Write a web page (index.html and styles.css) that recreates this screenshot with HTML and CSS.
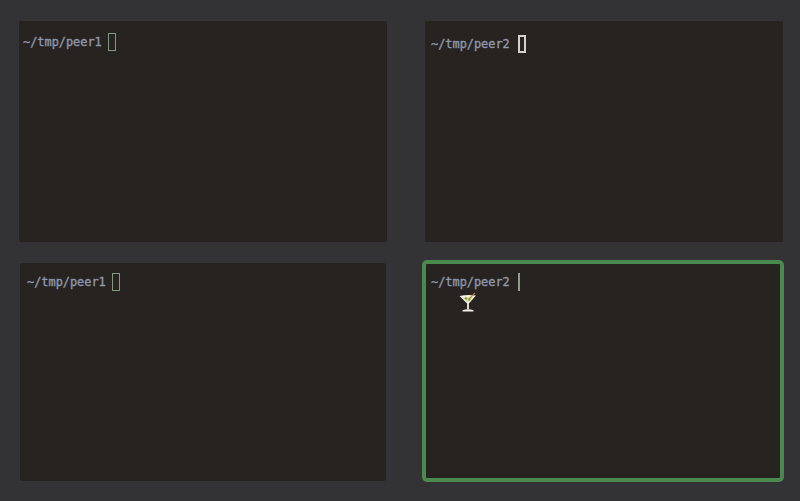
FILE: index.html
```html
<!DOCTYPE html>
<html lang="en">
<head>
<meta charset="utf-8">
<title>Terminal panes</title>
<link rel="stylesheet" href="styles.css">
</head>
<body>
<main class="grid">
  <section class="pane pane-tl">
    <div class="line"><span class="prompt">~/tmp/peer1</span><span class="cursor cursor-idle"></span></div>
  </section>
  <section class="pane pane-tr">
    <div class="line"><span class="prompt">~/tmp/peer2</span><span class="cursor cursor-white"></span></div>
  </section>
  <section class="pane pane-bl">
    <div class="line"><span class="prompt">~/tmp/peer1</span><span class="cursor cursor-idle"></span></div>
  </section>
  <section class="pane pane-br">
    <div class="line"><span class="prompt">~/tmp/peer2</span><span class="cursor cursor-bar"></span></div>
    <svg class="martini" width="18" height="20" viewBox="0 0 18 20" aria-hidden="true">
      <path d="M0.5 4 Q8 2.4 17 3.5 L9.9 11.5 V17 H8.1 V11.5 Z" fill="#f2f1e8"/>
      <path d="M3.5 5.5 H14 L9.6 10 H8.2 Z" fill="#d9dc9c"/>
      <path d="M3.5 18.2 Q9 16.2 14.5 18.2 V19.5 H3.5 Z" fill="#f2f1e8"/>
      <circle cx="7" cy="6.4" r="1.2" fill="#7f9a2c"/>
      <circle cx="10.2" cy="7.6" r="1.2" fill="#8aa52f"/>
      <path d="M10 7 L16 0.8" stroke="#b8873a" stroke-width="1.1"/>
    </svg>
  </section>
</main>
</body>
</html>
```
FILE: styles.css
```css
* { box-sizing: border-box; }
html, body { margin: 0; height: 100%; }
body {
  background: #333335;
  overflow: hidden;
}
.grid {
  display: grid;
  grid-template-columns: 368px 358px;
  grid-template-rows: 221px 218px;
  column-gap: 38px;
  row-gap: 21px;
  padding: 21px 0 0 19px;
}
.pane {
  background: #272320;
  border-radius: 2px;
  min-width: 0;
}
.pane-tl { padding: 12px 0 0 4px; }
.pane-tr { padding: 14px 0 0 6px; }
.pane-bl { margin: 0 1px 0 1px; padding: 10px 0 0 7px; }
.pane-br {
  margin: -3px -1px -1px -3px;
  border: 4px solid #4a8a4f;
  border-radius: 5px;
  padding: 9px 0 0 5px;
}
.line {
  display: flex;
  align-items: center;
  height: 18px;
}
.prompt {
  font-family: "DejaVu Sans Mono", monospace;
  font-size: 11.9px;
  color: #8f98ad;
  -webkit-text-stroke: 0.35px #8f98ad;
  white-space: nowrap;
}
.cursor {
  display: block;
  margin-left: 8px;
  width: 8px;
  height: 18px;
}
.cursor-idle { margin-left: 6.5px; border: 1px solid #7f9a7f; }
.cursor-white { border: 2px solid #d4d0ca; }
.cursor-bar { width: 2px; background: #959b8e; }
.martini {
  display: block;
  margin: 1px 0 0 28px;
}
```
